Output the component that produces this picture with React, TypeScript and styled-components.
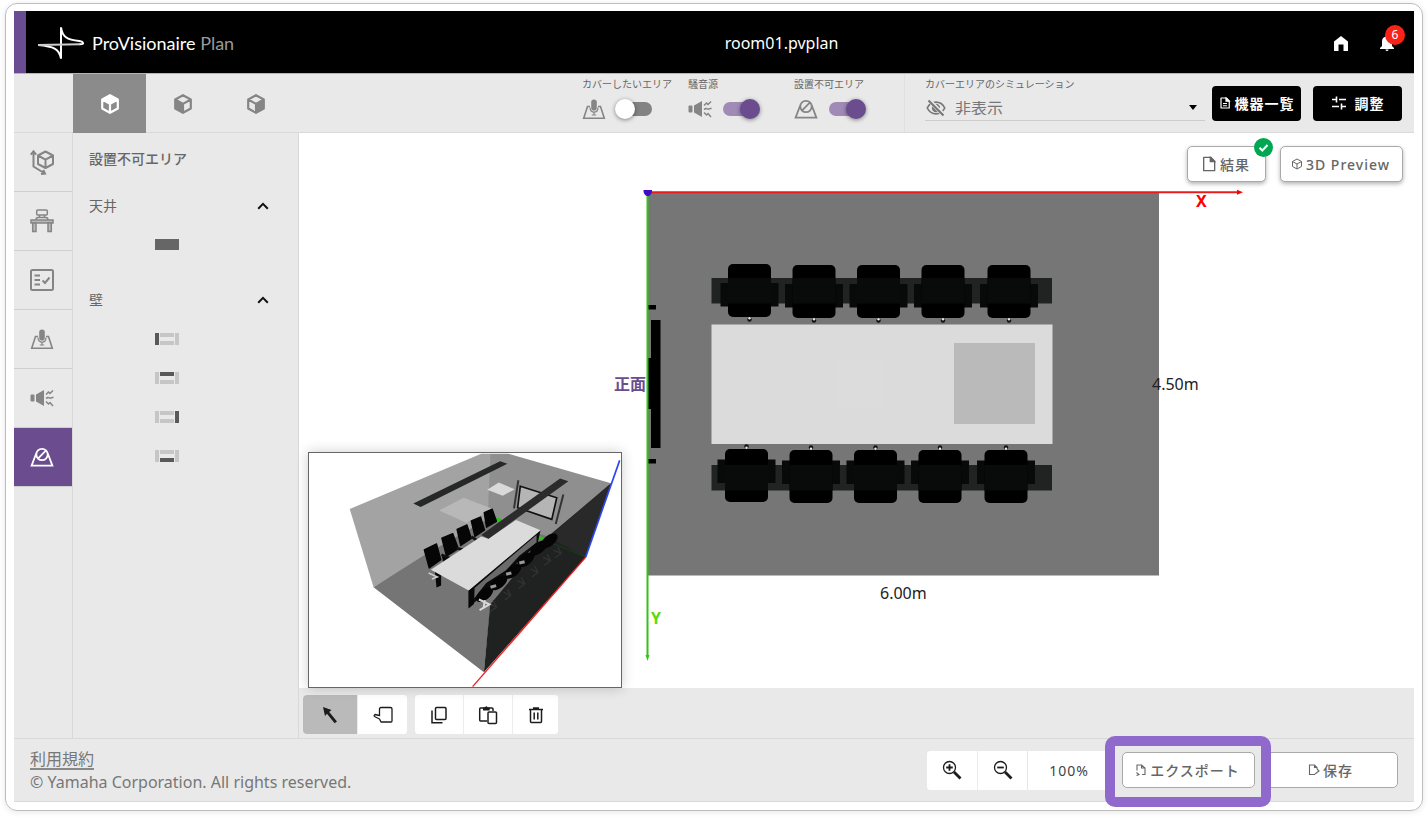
import React, { useState } from 'react';
import styled, { createGlobalStyle, css } from 'styled-components';

const PURPLE = '#6b4c8f';
const GREY = '#858585';
const LINE = '#d9d9d9';
const PANEL = '#e9e9e9';

const GlobalStyle = createGlobalStyle`
  * { box-sizing: border-box; }
  body {
    margin: 0;
    background: #fff;
    color: #666;
    font-family: "Noto Sans", "Noto Sans CJK JP", sans-serif;
    font-size: 14px;
  }
  button, select, input { font: inherit; color: inherit; margin: 0; }
  button { border: 0; padding: 0; background: none; cursor: pointer; }
  svg { display: block; flex: none; }
`;

const Page = styled.div`
  min-height: 100vh;
  padding: 3px 5px 7px;
  display: flex;
`;

const Card = styled.div`
  flex: 1;
  min-width: 0;
  display: flex;
  flex-direction: column;
  padding: 7px 8px 8px;
  border: 1px solid #bdbdbd;
  border-radius: 12px;
  box-shadow: 0 1px 6px rgba(0, 0, 0, 0.1);
`;

const Header = styled.header`
  height: 62px;
  display: flex;
  align-items: center;
  justify-content: space-between;
  padding: 2px 15px 0 12px;
  background: #000;
  color: #fff;
  border-left: 12px solid #6a4c93;
`;

const Brand = styled.a`
  display: flex;
  align-items: center;
  gap: 8px;
  color: #fff;
  text-decoration: none;
  font-family: Lato, sans-serif;
  font-size: 18px;
  line-height: 20px;
  span { color: #9a9a9a; }
`;

const FileName = styled.h1`
  margin: 0;
  font-size: 16px;
  line-height: 24px;
  font-weight: 400;
`;

const HeaderActions = styled.div`
  display: flex;
  align-items: center;
  gap: 22px;
`;

const HeaderButton = styled.button`
  position: relative;
  width: 24px;
  height: 24px;
  display: grid;
  place-items: center;
`;

const Count = styled.span`
  position: absolute;
  top: -6px;
  right: -6px;
  width: 20px;
  height: 20px;
  border-radius: 50%;
  background: #fb2318;
  font-size: 12px;
  line-height: 20px;
  text-align: center;
`;

const Toolbar = styled.div`
  height: 60px;
  display: flex;
  background: ${PANEL};
  border-top: 1px solid #b5b5b5;
  border-bottom: 1px solid ${LINE};
`;

const ViewTabs = styled.div`
  display: flex;
  margin-left: 59px;
  margin-right: auto;
`;

const ViewTab = styled.button<{ $active?: boolean }>`
  width: 73px;
  height: 59px;
  display: grid;
  place-items: center;
  color: ${(p) => (p.$active ? '#fff' : GREY)};
  background: ${(p) => (p.$active ? '#8b8b8b' : 'transparent')};
`;

const ToggleGroup = styled.label`
  width: 106px;
  display: flex;
  flex-direction: column;
  gap: 6px;
  padding-top: 3px;
  font-size: 10px;
  line-height: 14px;
  white-space: nowrap;
`;

const ToggleRow = styled.span`
  height: 24px;
  display: flex;
  align-items: center;
  gap: 9px;
  color: ${GREY};
`;

const Switch = styled.input`
  appearance: none;
  position: relative;
  width: 39px;
  height: 20px;
  cursor: pointer;
  &::before {
    content: '';
    position: absolute;
    inset: 3px 2px;
    border-radius: 7px;
    background: #838383;
  }
  &::after {
    content: '';
    position: absolute;
    top: 0;
    left: 0;
    width: 20px;
    height: 20px;
    border-radius: 50%;
    background: #fff;
    box-shadow: 0 1px 4px rgba(0, 0, 0, 0.45);
  }
  &:checked::before { background: #a08bb7; }
  &:checked::after { left: 19px; background: ${PURPLE}; }
`;

const Simulation = styled.div`
  width: 308px;
  margin-left: 4px;
  padding: 3px 7px 0 20px;
  border-left: 1px solid #e0e0e0;
  display: flex;
  flex-direction: column;
  font-size: 10px;
  line-height: 14px;
`;

const SelectBox = styled.div`
  position: relative;
  height: 30px;
  display: flex;
  align-items: center;
  padding-top: 4px;
  border-bottom: 1px solid #cdcdcd;
  color: #777;
  svg { position: absolute; pointer-events: none; }
  svg:first-child { left: 1px; }
  svg:last-child { right: 7px; }
  select {
    width: 100%;
    height: 25px;
    padding: 0 24px 0 30px;
    appearance: none;
    border: 0;
    background: none;
    font-size: 16px;
  }
`;

const ToolbarActions = styled.div`
  display: flex;
  align-items: center;
  gap: 12px;
  padding-right: 12px;
`;

const DarkButton = styled.button<{ $gap: number }>`
  width: 89px;
  height: 35px;
  display: flex;
  align-items: center;
  justify-content: center;
  gap: ${(p) => p.$gap}px;
  border-radius: 4px;
  background: #000;
  color: #fff;
  font-weight: 700;
  letter-spacing: 1px;
  white-space: nowrap;
`;

const Main = styled.main`
  flex: 1;
  display: flex;
  min-height: 605px;
`;

const SideNav = styled.nav`
  width: 59px;
  background: ${PANEL};
  border-right: 1px solid ${LINE};
`;

const SideButton = styled.button<{ $active?: boolean }>`
  width: 100%;
  height: 59px;
  padding-right: 3px;
  display: grid;
  place-items: center;
  border-bottom: 1px solid #cfcfcf;
  color: ${GREY};
  ${(p) => p.$active && css`
    color: #fff;
    background: ${PURPLE};
  `}
`;

const AreaPanel = styled.aside`
  width: 226px;
  padding: 0 16px;
  background: ${PANEL};
  border-right: 1px solid ${LINE};
`;

const PanelTitle = styled.h2`
  margin: 0 0 2px;
  font-size: 14px;
  line-height: 51px;
  font-weight: 500;
  color: #666;
`;

const Section = styled.section`
  margin-bottom: 16px;
`;

const SectionHead = styled.button`
  width: 100%;
  height: 39px;
  display: flex;
  align-items: center;
  justify-content: space-between;
  padding: 0 13px 2px 0;
  svg { color: #111; margin-top: 3px; }
`;

const SurfaceButton = styled.button`
  width: 156px;
  height: 39px;
  display: grid;
  place-items: center;
`;

const Workspace = styled.div`
  flex: 1;
  min-width: 0;
  display: flex;
  flex-direction: column;
`;

const Canvas = styled.div`
  flex: 1;
  position: relative;
  display: flex;
  background: #fff;
`;

const Plan = styled.svg`
  width: 100%;
  height: auto;
  flex: 1;
  font-size: 16px;
`;

const CanvasActions = styled.div`
  position: absolute;
  top: 13px;
  right: 11px;
  display: flex;
  gap: 14px;
`;

const OutlineButton = styled.button<{ $width: number; $raised?: boolean }>`
  position: relative;
  width: ${(p) => p.$width}px;
  height: 36px;
  display: flex;
  align-items: center;
  justify-content: center;
  gap: 3px;
  padding-right: 2px;
  border: 1px solid #a9a9a9;
  border-radius: 5px;
  background: #fff;
  font-weight: 500;
  letter-spacing: 1px;
  white-space: nowrap;
  box-shadow: ${(p) => (p.$raised ? '0 2px 4px rgba(0, 0, 0, 0.3)' : 'none')};
`;

const DoneMark = styled.span`
  position: absolute;
  top: -9px;
  right: -8px;
`;

const Preview = styled.figure`
  position: absolute;
  left: 9px;
  bottom: 0;
  width: 314px;
  height: 236px;
  margin: 0;
  border: 1px solid #666;
  background: #fff;
  box-shadow: 0 0 12px rgba(0, 0, 0, 0.2);
  svg { width: 100%; height: 100%; }
`;

const EditBar = styled.div`
  height: 50px;
  display: flex;
  align-items: center;
  gap: 8px;
  padding: 4px 4px 1px;
  background: ${PANEL};
`;

const ButtonGroup = styled.div`
  display: flex;
  height: 39px;
  border-radius: 4px;
  overflow: hidden;
  background: #fff;
  color: #1c1c1c;
`;

const GroupButton = styled.button<{ $width: number; $active?: boolean }>`
  width: ${(p) => p.$width}px;
  display: grid;
  place-items: center;
  background: ${(p) => (p.$active ? '#bababa' : '#fff')};
  & + & { border-left: 1px solid #ececec; }
`;

const Zoom = styled.output`
  width: 83px;
  border-left: 1px solid #e6e6e6;
  text-align: center;
  line-height: 39px;
  letter-spacing: 1px;
  color: #444;
`;

const Footer = styled.footer`
  height: 64px;
  display: flex;
  align-items: center;
  justify-content: space-between;
  padding: 0 16px;
  background: ${PANEL};
  border: 1px solid ${LINE};
  border-width: 1px 0;
`;

const Legal = styled.div`
  display: flex;
  flex-direction: column;
  align-items: flex-start;
  padding-top: 3px;
  font-size: 16px;
  line-height: 24px;
  color: #777;
  p { margin: 0; }
  a {
    color: inherit;
    line-height: 18px;
    text-decoration: none;
    border-bottom: 2px solid #888;
  }
`;

const FooterActions = styled.div`
  display: flex;
  align-items: center;
  gap: 10px;
`;

const Highlight = styled.div`
  position: relative;
  margin-left: 2px;
  &::after {
    content: '';
    position: absolute;
    z-index: 1;
    inset: -16px -16px -19px -17px;
    border: 10px solid #9069cc;
    border-radius: 10px;
    pointer-events: none;
  }
`;

type IconProps = { size?: number; box?: string; children: React.ReactNode; sw?: number };
const Icon = ({ size = 24, box = '0 0 24 24', children, sw = 2 }: IconProps) => (
  <svg width={size} height={size} viewBox={box} fill="none" stroke="currentColor" strokeWidth={sw} aria-hidden="true">
    {children}
  </svg>
);

const CubeIcon = ({ face }: { face: 'top' | 'left' | 'right' }) => {
  const faces = {
    top: 'M12 2.5 20 7 12 11.6 4 7Z',
    left: 'M4 7 12 11.6V21.2L4 16.8Z',
    right: 'M20 7 12 11.6V21.2L20 16.8Z',
  };
  return (
    <Icon size={22} sw={2.4}>
      <path d="M12 2.4 20.5 7.1V16.9L12 21.6 3.5 16.9V7.1ZM3.5 7.1 12 11.9 20.5 7.1M12 11.9V21.6" strokeLinejoin="round" />
      <path d={faces[face]} fill="currentColor" stroke="none" />
    </Icon>
  );
};

const RoomIcon = () => (
  <Icon size={26} box="0 0 26 26" sw={2}>
    <path d="M16.5 2.5 24 6.5V15L16.5 19 9 15V6.5ZM9 6.5 16.5 10.6 24 6.5M16.5 10.6V19" strokeLinejoin="round" />
    <path d="M4.500 3V17.500L15 24M1.800 5.600 4.500 2.400 7.200 5.600M12 25 16 24.600 14.300 20.800" />
  </Icon>
);

const DeskIcon = () => (
  <Icon size={26} box="0 0 26 26" sw={1.5}>
    <rect x="7.700" y="2" width="10.600" height="5" rx="1" />
    <path d="M10.500 7V9.500M15.500 7V9.500M7 12.200Q7 9.600 9.200 9.600H16.800Q19 9.600 19 12.200" />
    <rect x="2" y="12" width="22" height="3" fill="#b9b9b9" />
    <path d="M3.700 15H7V23.500H3.700ZM19 15H22.300V23.500H19Z" fill="#b9b9b9" />
  </Icon>
);

const ChecklistIcon = () => (
  <Icon size={26} box="0 0 26 26" sw={2}>
    <rect x="2" y="3" width="22" height="20" rx="1.5" />
    <path d="M5.500 8.500H11M5.500 13H11M5.500 17.500H11M13.500 13.500 16 16 20.500 10.500" />
  </Icon>
);

const CoverAreaIcon = () => (
  <Icon sw={1.6}>
    <path d="M8 9.500H5.500L1.700 21.200H22.300L18.500 9.500H16" />
    <rect x="9.200" y="2.500" width="5.600" height="11" rx="2.800" fill="currentColor" stroke="none" />
    <path d="M8 10.500c0 6.200 8 6.200 8 0M12 15v3M9.800 18h4.400" strokeWidth="1.200" />
  </Icon>
);

const NoiseIcon = () => (
  <Icon sw={1.5}>
    <rect x="0.500" y="8.500" width="4" height="7" rx="1" fill="currentColor" stroke="none" />
    <path d="M6 8.500 14 4V20L6 15.500Z" fill="currentColor" stroke="none" />
    <path d="M16 8.500 18.500 6l1.500 1.500L23 4.500M16 12.500l2-1.200 2 1 3.500-1M16 15.500l2.500 2.500 1.500-1.500 3 3.500" />
  </Icon>
);

const BlockedAreaIcon = () => (
  <Icon sw={1.8}>
    <path d="M6.200 8.500 1.600 20.700H22.400L17.800 8.500" />
    <circle cx="12" cy="9.500" r="5.700" />
    <path d="M8.200 13.300 15.800 5.700" />
  </Icon>
);

const PageIcon = ({ lines }: { lines?: boolean }) => (
  <Icon size={lines ? 12 : 16} sw={lines ? 2.4 : 2}>
    <path d="M4 2H14.500L20.500 8V22H4Z" strokeLinejoin="round" />
    <path d="M14 2V8.500H20.500Z" fill="currentColor" />
    {lines && <path d="M8 13H16M8 17.500H16" />}
  </Icon>
);

const ChevronUp = () => (
  <Icon size={12} box="0 0 12 12">
    <path d="M1.200 8.700 6 3.900l4.800 4.800" />
  </Icon>
);

type Wall = 'left' | 'top' | 'right' | 'bottom';
const WallIcon = ({ wall }: { wall: Wall }) => {
  const tone = (w: Wall) => (w === wall ? '#595959' : '#c6c6c6');
  return (
    <svg width="24" height="12" viewBox="0 0 24 12" aria-hidden="true">
      <rect x="0" y="0" width="4" height="12" fill={tone('left')} />
      <rect x="20" y="0" width="4" height="12" fill={tone('right')} />
      <rect x="5" y="0" width="14" height="4" fill={tone('top')} />
      <rect x="5" y="8" width="14" height="4" fill={tone('bottom')} />
    </svg>
  );
};

const TOP_SEATS = [749.5, 814, 878.5, 943, 1009];
const BOTTOM_SEATS = [746.5, 811, 875.5, 940, 1006];

const SeatRow = ({ seats, barY, seatY, armY, pegY }: {
  seats: number[]; barY: number; seatY: number; armY: number; pegY: number;
}) => (
  <g>
    <rect x="711.500" y={barY} width="340.500" height="25.500" fill="#212322" />
    {seats.map((x, i) => {
      const y = i === 0 ? 0 : 1;
      return (
        <g key={x}>
          <rect x={x - 29} y={armY + y} width="58" height="23.500" fill="#070a09" />
          <rect x={x - 21.5} y={seatY + y} width="43" height="53" rx="5" fill="#000" />
          <rect x={x - 21.5} y={barY} width="43" height="25.500" fill="#080b0a" />
          <circle cx={x} cy={pegY + y} r="2.200" fill="#111" />
          <circle cx={x} cy={pegY + y + (pegY < 400 ? -1.2 : 1.2)} r="1.200" fill="#e8e8e8" />
        </g>
      );
    })}
  </g>
);

const FloorPlan = () => (
  <Plan viewBox="299 133 1115 555" role="img" aria-label="平面図">
    <rect x="648" y="192" width="511" height="383.500" fill="#767676" />
    <SeatRow seats={TOP_SEATS} barY={278} seatY={264} armY={283} pegY={319.5} />
    <SeatRow seats={BOTTOM_SEATS} barY={465} seatY={449} armY={459.5} pegY={446.5} />
    <rect x="711.500" y="324.500" width="341" height="119.500" fill="#dbdbdb" />
    <rect x="837" y="360" width="47" height="48" fill="#dcdcdc" />
    <rect x="954" y="343" width="81" height="81" fill="#bababa" />
    <path d="M651 320h9.500v128h-9.500v-39h-3v-51h3ZM648 305h8v4.500h-8ZM648 459h8v4.500h-8Z" fill="#000" />
    <path d="M647.500 192V656" stroke="#35c21a" strokeWidth="2" />
    <path d="M645.500 655h4l-2 6Z" fill="#35c21a" />
    <path d="M647 192.300H1238" stroke="#e81c1c" strokeWidth="2" />
    <path d="M1237 189.800 1243 192.300 1237 194.800Z" fill="#ff0000" />
    <path d="M643.500 190h8.500c0 8-8.500 8-8.500 0Z" fill="#3c0cc8" />
    <text x="614" y="390" fontWeight="700" fill={PURPLE}>正面</text>
    <text x="1196" y="207" fontWeight="700" fill="#f00">X</text>
    <text x="651" y="624" fontWeight="700" fill="#5bdc0c">Y</text>
    <text x="1152" y="390" fill="#222">4.50m</text>
    <text x="880" y="599" fill="#222">6.00m</text>
  </Plan>
);

const BACK_CHAIRS = ['M373 330 410 312 423 360 388 385Z', 'M426 295 459 281 476 327 440 349Z',
  'M472 268 502 255 515 296 483 317Z', 'M515 243 543 231 555 270 526 290Z', 'M554 218 578 207 591 244 561 262Z'];
const FRONT_CHAIRS = [[555, 465], [598, 430], [640, 395], [680, 360], [718, 325], [750, 303]];

const RoomPreview = () => (
  <svg viewBox="25 39 942 704" role="img" aria-label="3D">
    <path d="M148 207 545 40H575L566 240 220 443Z" fill="#a3a3a3" />
    <path d="M573 40H627L937 129 750 300 564 240Z" fill="#8f8f8f" />
    <path d="M220 443 375 345 566 236 780 300 573 495 553 700Z" fill="#757575" />
    <path d="M937 129 860 353 553 700 572 495 735 300Z" fill="#1f2221" />
    <path d="M937 129 860 353 762 298 752 290Z" fill="#292929" />
    <path d="M340 190 602 63 624 70 362 201Z" fill="#262727" />
    <path d="M418 211 492 173 580 207 500 248Z" fill="#b8b8b8" />
    <path d="M563 149 598 127 646 147 610 167Z" fill="#d9d9d9" />
    <path d="M663 138 773 173 758 238 655 203Z" fill="#b5b5b5" stroke="#111" strokeWidth="5" />
    <path d="M657 120 644 205M793 163 770 252" stroke="#333" strokeWidth="6" />
    <path d="M588 236 606 242M718 292 744 302" stroke="#25c614" strokeWidth="9" />
    <path d="M740 302 860 351" stroke="#124b12" strokeWidth="2" />
    {BACK_CHAIRS.map((d) => <path key={d} d={d} fill="#060606" stroke="#060606" strokeWidth="4" strokeLinejoin="round" />)}
    <path d="M425 345 450 355 430 365M470 325 490 330M515 290 530 300" stroke="#111" strokeWidth="8" />
    <path d="M405 395 424 400V438L410 444Z" fill="#080808" />
    <path d="M386 400 412 412 396 418" stroke="#c9c9c9" strokeWidth="5" fill="none" />
    <path d="M507 453 724 271 715 312 590 430 507 505Z" fill="#0b0b0b" />
    <path d="M525 445 712 285V308L660 348 620 392 560 430 524 476Z" fill="#6a6a6a" />
    {FRONT_CHAIRS.map(([x, y]) => (
      <g key={x}>
        <ellipse cx={x} cy={y} rx="30" ry="16" fill="#050505" transform={`rotate(-38 ${x} ${y})`} />
        <path d={`M${x + 14} ${y + 28}l22 10-18 14M${x + 36} ${y + 38}l-10-20`} stroke="#303332" strokeWidth="4" fill="none" />
      </g>
    ))}
    <path d="M573 443 590 438M620 404 636 400M660 370 676 366" stroke="#999" strokeWidth="9" />
    <path d="M393 390 545 290 567 297 650 240 724 271 507 453Z" fill="#dbdbdb" />
    <path d="M545 285 783 115 808 123 567 297Z" fill="#2b2b2b" />
    <path d="M507 453 523 445V494L507 507Z" fill="#080808" />
    <path d="M538 480 570 495 540 512M552 505 556 482" stroke="#d8d8d8" strokeWidth="6" fill="none" />
    <path d="M963 60 860 353" stroke="#2d46f0" strokeWidth="5" />
    <path d="M860 353 519 743" stroke="#f01e1e" strokeWidth="4" />
  </svg>
);

const VIEWS = ['top', 'left', 'right'] as const;
const SIDE_ITEMS = [
  { label: '部屋', icon: <RoomIcon /> },
  { label: '家具', icon: <DeskIcon /> },
  { label: '要件', icon: <ChecklistIcon /> },
  { label: 'カバーしたいエリア', icon: <CoverAreaIcon /> },
  { label: '騒音源', icon: <NoiseIcon /> },
  { label: '設置不可エリア', icon: <BlockedAreaIcon /> },
];
const TOGGLES = [
  { label: 'カバーしたいエリア', icon: <CoverAreaIcon />, on: false },
  { label: '騒音源', icon: <NoiseIcon />, on: true },
  { label: '設置不可エリア', icon: <BlockedAreaIcon />, on: true },
];
const WALLS: Wall[] = ['left', 'top', 'right', 'bottom'];

export default function App() {
  const [view, setView] = useState<string>('top');
  const [side, setSide] = useState(5);
  return (
    <>
      <GlobalStyle />
      <Page>
        <Card>
          <Header>
            <Brand href="#">
              <svg width="46" height="34" viewBox="114 74 138 102" fill="none" stroke="#fff" strokeWidth="6" aria-hidden="true">
                <path d="M183 129V78C187 106 200 116 238 119Q250 121 249 127 247 129 238 129" />
                <path d="M183 131V172C178 142 160 135 114 131" />
                <path d="M114 131 240 129" stroke="#ccc" />
              </svg>
              <div>ProVisionaire <span>Plan</span></div>
            </Brand>
            <FileName>room01.pvplan</FileName>
            <HeaderActions>
              <HeaderButton aria-label="ホーム">
                <svg width="14" height="15" viewBox="0 0 14 15" fill="#fff"><path d="M7 0 14 5.500V15H9.500V8.500H4.500V15H0V5.500Z" /></svg>
              </HeaderButton>
              <HeaderButton aria-label="通知">
                <svg width="14" height="16" viewBox="0 0 14 16" fill="#fff"><path d="M7 0c1 0 1.400.700 1.400 1.500C10.700 2.200 12 4 12 6.500V11l2 2v1H0v-1l2-2V6.500C2 4 3.300 2.200 5.600 1.500 5.600.700 6 0 7 0ZM5.500 14.500h3a1.500 1.500 0 0 1-3 0Z" /></svg>
                <Count>6</Count>
              </HeaderButton>
            </HeaderActions>
          </Header>

          <Toolbar>
            <ViewTabs>
              {VIEWS.map((v) => (
                <ViewTab key={v} $active={view === v} aria-label={v} onClick={() => setView(v)}>
                  <CubeIcon face={v} />
                </ViewTab>
              ))}
            </ViewTabs>
            {TOGGLES.map((t) => (
              <ToggleGroup key={t.label}>
                {t.label}
                <ToggleRow>{t.icon}<Switch type="checkbox" role="switch" defaultChecked={t.on} /></ToggleRow>
              </ToggleGroup>
            ))}
            <Simulation>
              <label htmlFor="simulation">カバーエリアのシミュレーション</label>
              <SelectBox>
                <Icon size={20} sw={2}>
                  <path d="M1.500 12C4 7 8 5 12 5s8 2 10.500 7C20 17 16 19 12 19S4 17 1.500 12Z" />
                  <circle cx="12" cy="12" r="4" fill="currentColor" />
                  <path d="M3 2 22 21" stroke={PANEL} strokeWidth="5" />
                  <path d="M3 3 21 21" strokeWidth="2.500" />
                </Icon>
                <select id="simulation" defaultValue="none"><option value="none">非表示</option></select>
                <svg width="10" height="5" viewBox="0 0 10 5"><path d="M1 0H9L5 5Z" fill="#000" /></svg>
              </SelectBox>
            </Simulation>
            <ToolbarActions>
              <DarkButton $gap={4}><PageIcon lines />機器一覧</DarkButton>
              <DarkButton $gap={8}>
                <Icon size={16} box="0 0 16 16" sw={1.6}>
                  <path d="M1 4.500H5.500M8 4.500H15M1 11.500H8M10.500 11.500H15M5.500 1.500V7.500M10.500 8.500V14.500" />
                </Icon>
                調整
              </DarkButton>
            </ToolbarActions>
          </Toolbar>

          <Main>
            <SideNav>
              {SIDE_ITEMS.map((s, i) => (
                <SideButton key={s.label} $active={side === i} aria-label={s.label} onClick={() => setSide(i)}>{s.icon}</SideButton>
              ))}
            </SideNav>
            <AreaPanel>
              <PanelTitle>設置不可エリア</PanelTitle>
              <Section>
                <SectionHead>天井<ChevronUp /></SectionHead>
                <SurfaceButton aria-label="天井">
                  <svg width="24" height="11"><rect width="24" height="11" fill="#666" /></svg>
                </SurfaceButton>
              </Section>
              <Section>
                <SectionHead>壁<ChevronUp /></SectionHead>
                {WALLS.map((w) => (
                  <SurfaceButton key={w} aria-label={w}><WallIcon wall={w} /></SurfaceButton>
                ))}
              </Section>
            </AreaPanel>

            <Workspace>
              <Canvas>
                <FloorPlan />
                <CanvasActions>
                  <OutlineButton $width={79} $raised>
                    <PageIcon />結果
                    <DoneMark>
                      <svg width="19" height="19" viewBox="0 0 19 19"><circle cx="9.500" cy="9.500" r="9.500" fill="#00a651" /><path d="M5.500 9.800 8.300 12.500 13.500 7" stroke="#fff" strokeWidth="2" fill="none" /></svg>
                    </DoneMark>
                  </OutlineButton>
                  <OutlineButton $width={123} $raised>
                    <Icon size={12}><path d="M12 2 21 7V17L12 22 3 17V7ZM3 7 12 12 21 7M12 12V22" /></Icon>
                    3D Preview
                  </OutlineButton>
                </CanvasActions>
                <Preview><RoomPreview /></Preview>
              </Canvas>
              <EditBar>
                <ButtonGroup>
                  <GroupButton $width={54} $active aria-label="選択">
                    <svg width="16" height="18" viewBox="0 0 16 18"><path d="M1 1 9.500 4 7.200 6 15 15.500 12.600 17.300 5 7.800 3 10Z" fill="#1c1c1c" /></svg>
                  </GroupButton>
                  <GroupButton $width={50} aria-label="移動">
                    <Icon size={20} box="0 0 20 20" sw={1.3}>
                      <path d="M8 2.500H17.500Q19 2.500 19 4V16Q19 17 18 17H8L6.500 14 1.500 11.500Q.600 10.500 2 9.500L6.500 10.500V4Q6.500 2.500 8 2.500Z" strokeLinejoin="round" />
                    </Icon>
                  </GroupButton>
                </ButtonGroup>
                <ButtonGroup>
                  <GroupButton $width={48} aria-label="コピー">
                    <Icon size={18} box="0 0 18 18" sw={1.5}><rect x="5.500" y="1.500" width="10.500" height="12" rx="1" /><path d="M2 4.500V16.800H12.500" /></Icon>
                  </GroupButton>
                  <GroupButton $width={49} aria-label="貼り付け">
                    <Icon size={20} box="0 0 20 20" sw={1.5}>
                      <path d="M9 16H2.500Q1.700 16 1.700 15V4Q1.700 3 2.500 3H14Q15 3 15 4V6" />
                      <path d="M5 2.500H7Q8.300 0 9.700 2.500H11.700V5.500H5Z" fill="currentColor" stroke="none" />
                      <rect x="10" y="7" width="8.500" height="11.500" rx="1" />
                    </Icon>
                  </GroupButton>
                  <GroupButton $width={46} aria-label="削除">
                    <Icon size={18} box="0 0 18 18" sw={1.5}><path d="M2 3.500H16M6 2H12M3.500 3.500V15.500Q3.500 16.500 4.500 16.500H13.500Q14.500 16.500 14.500 15.500V3.500M7.200 6.500V13.500M10.800 6.500V13.500" /></Icon>
                  </GroupButton>
                </ButtonGroup>
              </EditBar>
            </Workspace>
          </Main>

          <Footer>
            <Legal>
              <a href="#">利用規約</a>
              <p>© Yamaha Corporation. All rights reserved.</p>
            </Legal>
            <FooterActions>
              <ButtonGroup>
                {['拡大', '縮小'].map((label, i) => (
                  <GroupButton key={label} $width={50} aria-label={label}>
                    <Icon size={20} box="0 0 20 20" sw={1.3}>
                      <circle cx="7.500" cy="7.500" r="6" />
                      <path d={i === 0 ? 'M4.200 7.500H10.800M7.500 4.200V10.800' : 'M4.200 7.500H10.800'} strokeWidth="1.800" />
                      <path d="M12 12 18.500 18.500" strokeWidth="2.800" />
                    </Icon>
                  </GroupButton>
                ))}
                <Zoom>100%</Zoom>
              </ButtonGroup>
              <Highlight>
                <OutlineButton $width={133}>
                  <Icon size={12} sw={2.2}><path d="M4 13V2H13L20 8V21H14M13 2V8H20M3 17 8 21 3 23" /></Icon>
                  エクスポート
                </OutlineButton>
              </Highlight>
              <OutlineButton $width={133}>
                <Icon size={12} sw={2.2}><path d="M14 21H3V2H13L18 7V10M13 2V7H18M14 20 22 14 18 10" /></Icon>
                保存
              </OutlineButton>
            </FooterActions>
          </Footer>
        </Card>
      </Page>
    </>
  );
}
